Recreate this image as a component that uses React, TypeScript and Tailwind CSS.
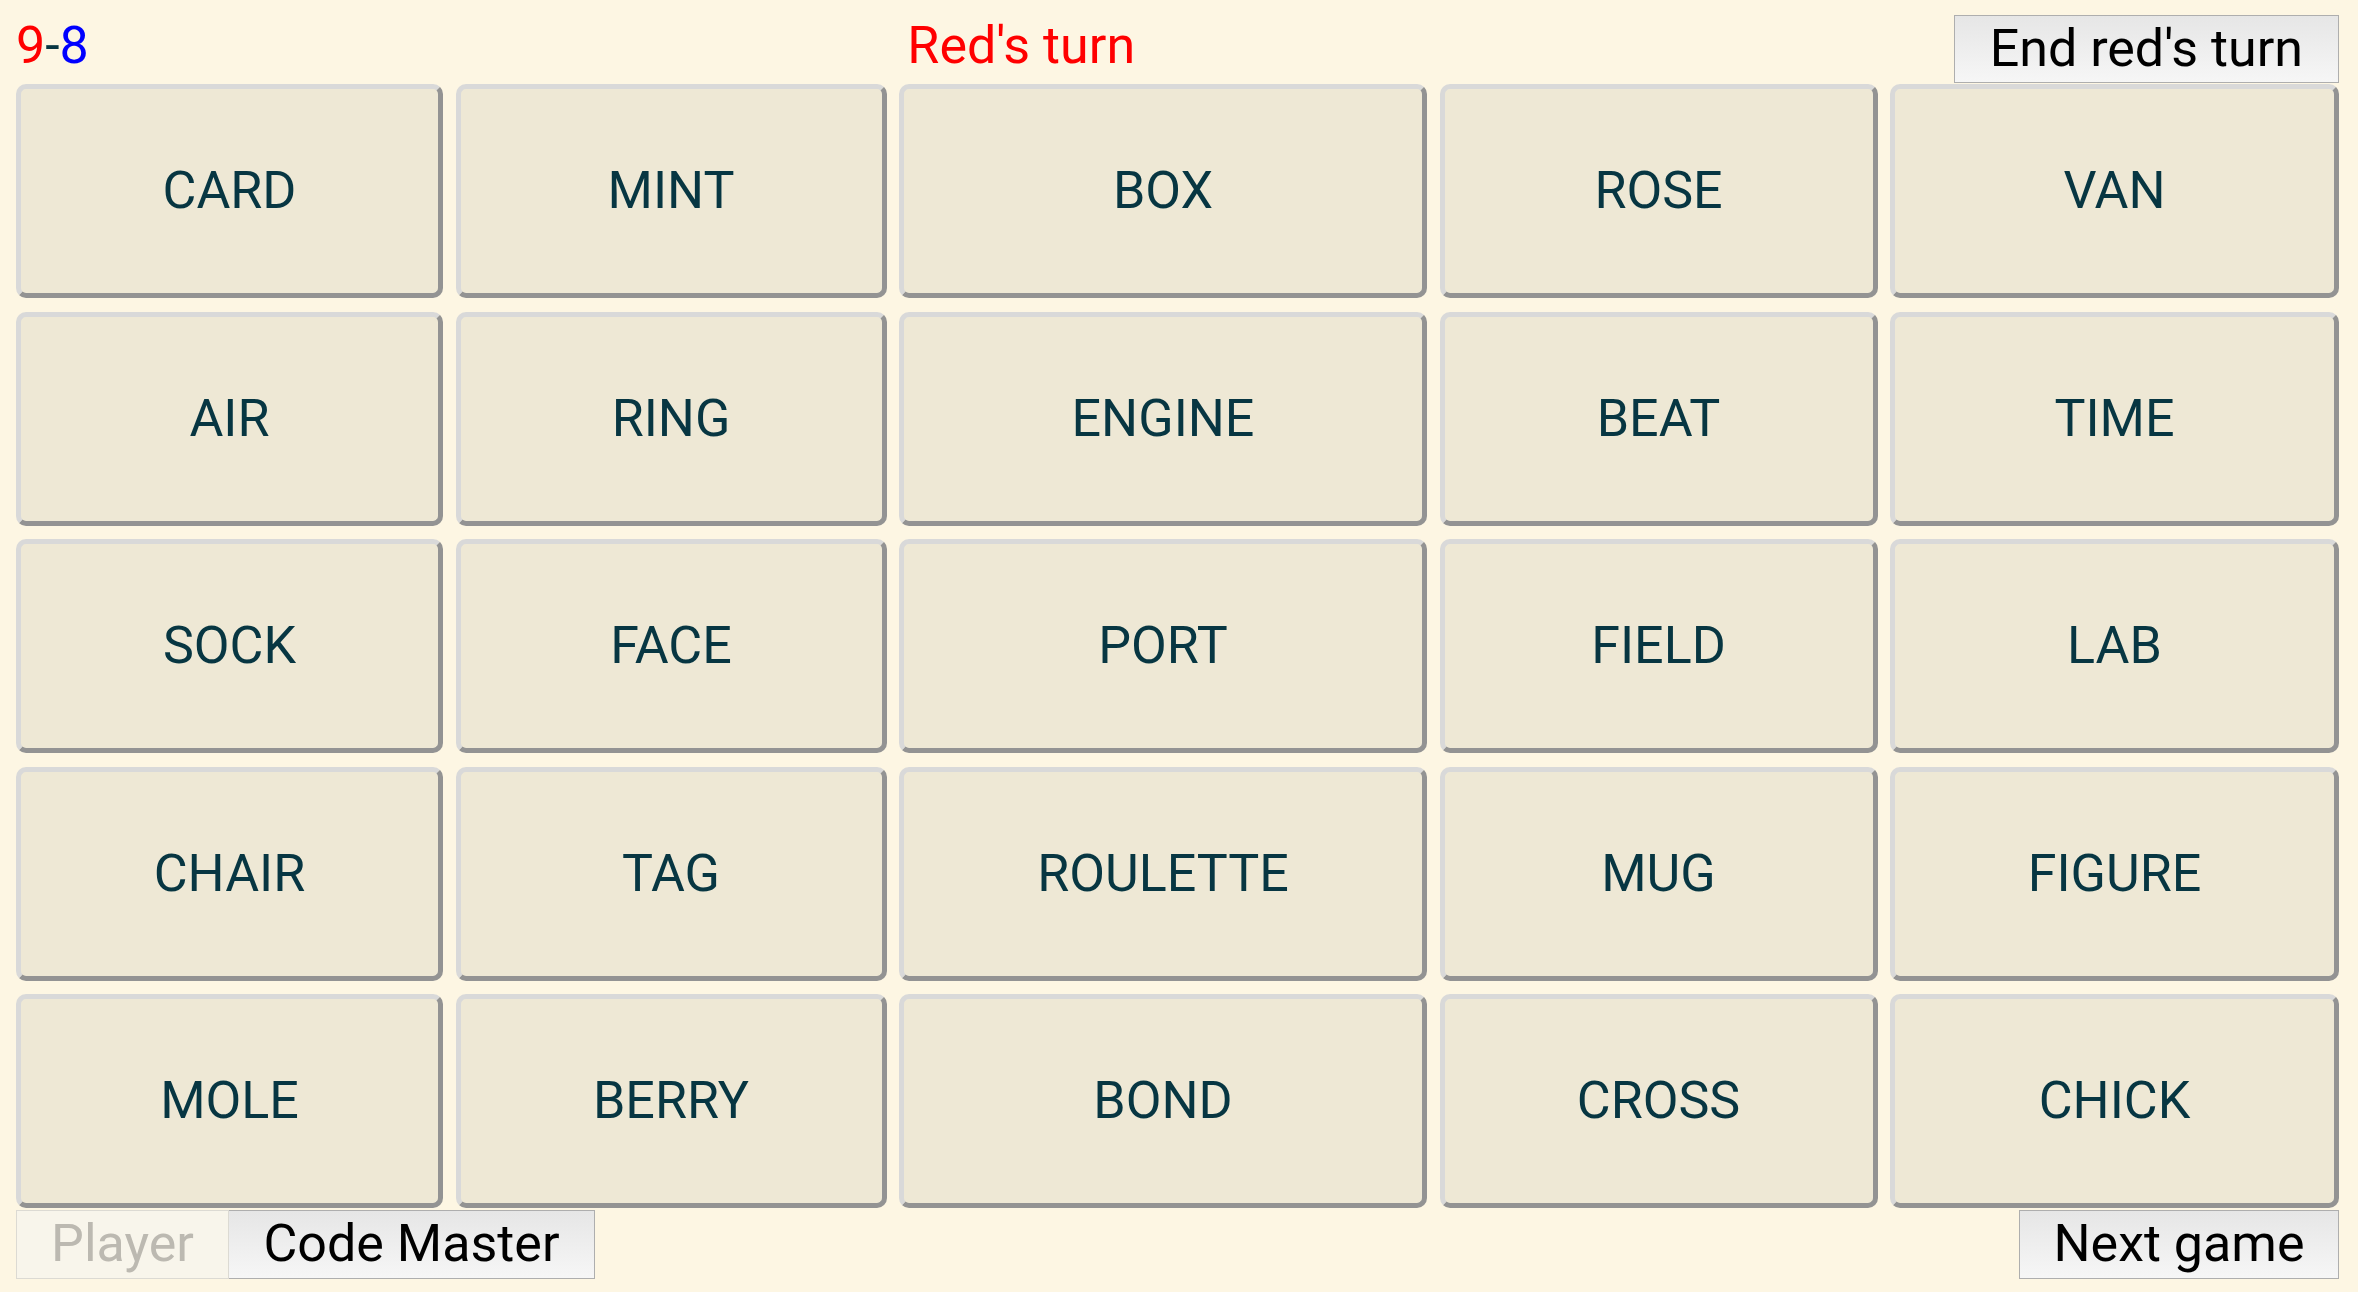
const words = [
  ["CARD", "MINT", "BOX", "ROSE", "VAN"],
  ["AIR", "RING", "ENGINE", "BEAT", "TIME"],
  ["SOCK", "FACE", "PORT", "FIELD", "LAB"],
  ["CHAIR", "TAG", "ROULETTE", "MUG", "FIGURE"],
  ["MOLE", "BERRY", "BOND", "CROSS", "CHICK"],
];

function Card({ word }: { word: string }) {
  return (
    <div className="h-[214px] flex items-center justify-center rounded-[10px] border-[5px] border-t-[#d9d9d9] border-l-[#d9d9d9] border-r-[#939393] border-b-[#939393] bg-[#eee8d5] text-[#073642] text-[52px]">
      {word}
    </div>
  );
}

export default function App() {
  return (
    <div className="min-h-screen w-full bg-[#fdf6e3] font-['Roboto',sans-serif] pl-[16px] pr-[19px] pt-[15px]">
      {/* Top bar */}
      <div className="flex justify-between items-start h-[69px] text-[52px] leading-[61px]">
        <div>
          <span className="text-[#ff0000]">9</span>
          <span className="text-[#073642]">-</span>
          <span className="text-[#0000ff]">8</span>
        </div>
        <div className="text-[#ff0000]">Red's turn</div>
        <button className="h-[68px] px-[35px] border-[1.5px] border-[#aeaeae] bg-gradient-to-b from-[#e6e6e6] to-[#f6f6f6] text-black leading-none">
          End red's turn
        </button>
      </div>

      {/* Board */}
      <div className="grid grid-cols-[427fr_431fr_528fr_438fr_449fr] gap-x-[12.5px] gap-y-[13.5px]">
        {words.flat().map((w) => (
          <Card key={w} word={w} />
        ))}
      </div>

      {/* Bottom bar */}
      <div className="flex justify-between items-start mt-[1.5px] text-[52px]">
        <div className="flex">
          <button className="h-[69px] w-[213px] border-[1.5px] border-[#dcdad3] bg-[#f8f5eb] text-[#bcb9b1] leading-none">
            Player
          </button>
          <button className="h-[69px] w-[366px] border-[1.5px] border-l-0 border-[#aeaeae] bg-gradient-to-b from-[#e6e6e6] to-[#f6f6f6] text-black leading-none">
            Code Master
          </button>
        </div>
        <button className="h-[69px] w-[320px] border-[1.5px] border-[#aeaeae] bg-gradient-to-b from-[#e6e6e6] to-[#f6f6f6] text-black leading-none">
          Next game
        </button>
      </div>
    </div>
  );
}
